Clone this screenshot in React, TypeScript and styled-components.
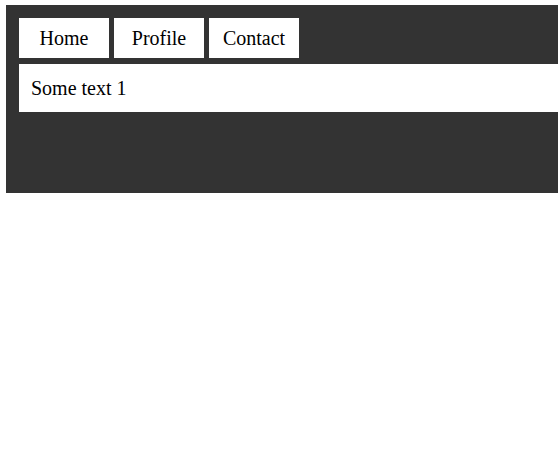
import styled, { createGlobalStyle } from "styled-components";

const GlobalStyle = createGlobalStyle`
  html, body {
    margin: 0;
    padding: 0;
    overflow: hidden;
    background: #ffffff;
    font-family: "Liberation Serif", "Times New Roman", serif;
  }
`;

const Panel = styled.div`
  box-sizing: border-box;
  margin: 5px 0 0 6px;
  height: 188px;
  padding: 13px 0 13px 13px;
  background-color: #333333;
`;

const TabBar = styled.div`
  display: flex;
  gap: 5px;
`;

const Tab = styled.button`
  width: 90px;
  height: 40px;
  border: none;
  padding: 0;
  background-color: #ffffff;
  color: #000000;
  font-family: "Liberation Serif", "Times New Roman", serif;
  font-size: 20px;
  cursor: pointer;
`;

const TabContent = styled.div`
  box-sizing: border-box;
  display: flex;
  align-items: center;
  height: 48px;
  margin-top: 6px;
  padding: 0 12px;
  background-color: #ffffff;
  color: #000000;
  font-size: 20px;
`;

const tabs = ["Home", "Profile", "Contact"];

const App = () => {
  return (
    <>
      <GlobalStyle />
      <Panel>
        <TabBar>
          {tabs.map((t) => (
            <Tab key={t}>{t}</Tab>
          ))}
        </TabBar>
        <TabContent>Some text 1</TabContent>
      </Panel>
    </>
  );
};

export default App;
